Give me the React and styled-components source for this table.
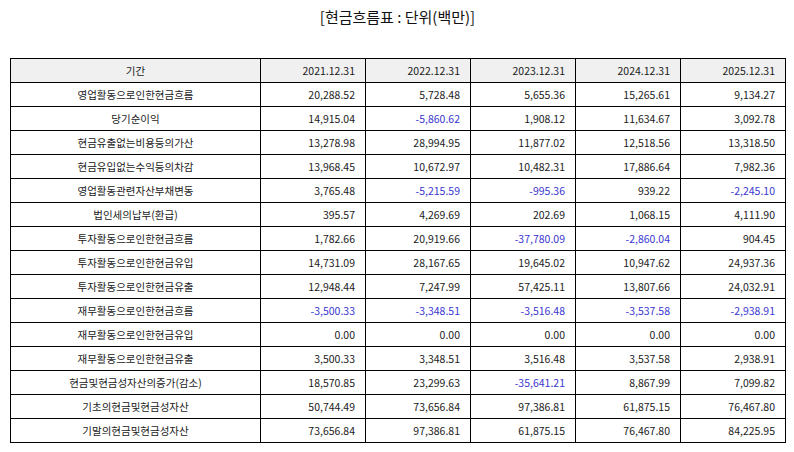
import React from 'react';
import styled, { createGlobalStyle } from 'styled-components';

const GlobalStyle = createGlobalStyle`
  html, body {
    margin: 0;
    padding: 0;
    background: #ffffff;
  }
  body {
    font-family: "Noto Sans CJK KR", "Noto Sans", sans-serif;
    color: #1a1a1a;
  }
`;

const Page = styled.div`
  width: 794px;
  height: 452px;
  padding: 0 9px 0 10px;
  box-sizing: border-box;
`;

const Title = styled.h1`
  margin: 0;
  padding-top: 6px;
  height: 58px;
  box-sizing: border-box;
  text-align: center;
  font-size: 15px;
  font-weight: 400;
  line-height: 22px;
  color: #111111;
`;

const Table = styled.table`
  width: 775px;
  border-collapse: collapse;
  table-layout: fixed;
  font-size: 10.5px;
`;

const HeadCell = styled.th`
  height: 23px;
  padding: 0 10px;
  border: 1px solid #000000;
  background: #f0f0f0;
  font-weight: 400;
  text-align: ${(props) => (props.$label ? 'center' : 'right')};
`;

const LabelCell = styled.td`
  height: 23px;
  padding: 0 6px;
  border: 1px solid #000000;
  text-align: center;
  white-space: nowrap;
`;

const ValueCell = styled.td`
  height: 23px;
  padding: 0 10px;
  border: 1px solid #000000;
  text-align: right;
  color: ${(props) => (props.$negative ? '#3a36d0' : '#1a1a1a')};
`;

const periods = ['2021.12.31', '2022.12.31', '2023.12.31', '2024.12.31', '2025.12.31'];

const rows = [
  ['영업활동으로인한현금흐름', '20,288.52', '5,728.48', '5,655.36', '15,265.61', '9,134.27'],
  ['당기순이익', '14,915.04', '-5,860.62', '1,908.12', '11,634.67', '3,092.78'],
  ['현금유출없는비용등의가산', '13,278.98', '28,994.95', '11,877.02', '12,518.56', '13,318.50'],
  ['현금유입없는수익등의차감', '13,968.45', '10,672.97', '10,482.31', '17,886.64', '7,982.36'],
  ['영업활동관련자산부채변동', '3,765.48', '-5,215.59', '-995.36', '939.22', '-2,245.10'],
  ['법인세의납부(환급)', '395.57', '4,269.69', '202.69', '1,068.15', '4,111.90'],
  ['투자활동으로인한현금흐름', '1,782.66', '20,919.66', '-37,780.09', '-2,860.04', '904.45'],
  ['투자활동으로인한현금유입', '14,731.09', '28,167.65', '19,645.02', '10,947.62', '24,937.36'],
  ['투자활동으로인한현금유출', '12,948.44', '7,247.99', '57,425.11', '13,807.66', '24,032.91'],
  ['재무활동으로인한현금흐름', '-3,500.33', '-3,348.51', '-3,516.48', '-3,537.58', '-2,938.91'],
  ['재무활동으로인한현금유입', '0.00', '0.00', '0.00', '0.00', '0.00'],
  ['재무활동으로인한현금유출', '3,500.33', '3,348.51', '3,516.48', '3,537.58', '2,938.91'],
  ['현금및현금성자산의증가(감소)', '18,570.85', '23,299.63', '-35,641.21', '8,867.99', '7,099.82'],
  ['기초의현금및현금성자산', '50,744.49', '73,656.84', '97,386.81', '61,875.15', '76,467.80'],
  ['기말의현금및현금성자산', '73,656.84', '97,386.81', '61,875.15', '76,467.80', '84,225.95'],
];

const App = () => {
  return (
    <>
      <GlobalStyle />
      <Page>
        <Title>[현금흐름표 : 단위(백만)]</Title>
        <Table>
          <colgroup>
            <col style={{ width: 250 }} />
            {periods.map((p) => (
              <col key={p} style={{ width: 105 }} />
            ))}
          </colgroup>
          <thead>
            <tr>
              <HeadCell $label>기간</HeadCell>
              {periods.map((p) => (
                <HeadCell key={p}>{p}</HeadCell>
              ))}
            </tr>
          </thead>
          <tbody>
            {rows.map(([label, ...values]) => (
              <tr key={label}>
                <LabelCell>{label}</LabelCell>
                {values.map((v, i) => (
                  <ValueCell key={i} $negative={v.startsWith('-')}>
                    {v}
                  </ValueCell>
                ))}
              </tr>
            ))}
          </tbody>
        </Table>
      </Page>
    </>
  );
};

export default App;
